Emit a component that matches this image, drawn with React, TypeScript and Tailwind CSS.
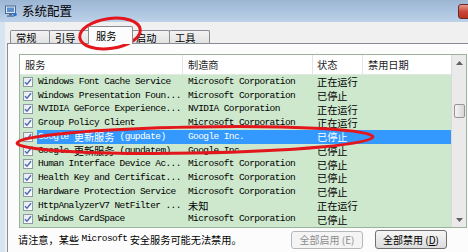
import React from "react";

const CJK = '"Noto Sans CJK SC", "Noto Sans", sans-serif';
const MONO = '"Liberation Mono", "Noto Sans CJK SC", monospace';

function M({ children, className = "" }: { children: React.ReactNode; className?: string }) {
  return (
    <span className={"text-[9.5px] tracking-[-0.6px] " + className} style={{ fontFamily: MONO }}>
      {children}
    </span>
  );
}
function C({ children, className = "" }: { children: React.ReactNode; className?: string }) {
  return (
    <span className={"text-[10.2px] " + className} style={{ fontFamily: CJK }}>
      {children}
    </span>
  );
}

type Row = { name: React.ReactNode; maker: React.ReactNode; status: string; sel?: boolean };

const rows: Row[] = [
  { name: <M>Windows Font Cache Service</M>, maker: <M>Microsoft Corporation</M>, status: "正在运行" },
  { name: <M>Windows Presentation Foun...</M>, maker: <M>Microsoft Corporation</M>, status: "已停止" },
  { name: <M>NVIDIA GeForce Experience...</M>, maker: <M>NVIDIA Corporation</M>, status: "正在运行" },
  { name: <M>Group Policy Client</M>, maker: <M>Microsoft Corporation</M>, status: "正在运行" },
  {
    name: (
      <>
        <M>Google&nbsp;</M>
        <C>更新服务</C>
        <M>&nbsp;(gupdate)</M>
      </>
    ),
    maker: <M>Google Inc.</M>,
    status: "已停止",
    sel: true,
  },
  {
    name: (
      <>
        <M>Google&nbsp;</M>
        <C>更新服务</C>
        <M>&nbsp;(gupdatem)</M>
      </>
    ),
    maker: <M>Google Inc.</M>,
    status: "已停止",
  },
  { name: <M>Human Interface Device Ac...</M>, maker: <M>Microsoft Corporation</M>, status: "已停止" },
  { name: <M>Health Key and Certificat...</M>, maker: <M>Microsoft Corporation</M>, status: "已停止" },
  { name: <M>Hardware Protection Service</M>, maker: <M>Microsoft Corporation</M>, status: "已停止" },
  { name: <M>HttpAnalyzerV7 NetFilter ...</M>, maker: <C>未知</C>, status: "正在运行" },
  { name: <M>Windows CardSpace</M>, maker: <M>Microsoft Corporation</M>, status: "已停止" },
];

function Check() {
  return (
    <div className="w-[10px] h-[10px] border border-[#8f9aa8] bg-gradient-to-br from-[#e6e9ee] to-white flex items-center justify-center">
      <svg width="8" height="8" viewBox="0 0 8 8">
        <path d="M1 4.2 L3 6.3 L7 1.2" fill="none" stroke="#4a6cb3" strokeWidth="1.4" />
      </svg>
    </div>
  );
}

function Tab({ label, sel = false, w }: { label: string; sel?: boolean; w: string }) {
  if (sel) {
    return (
      <div
        className={`${w} h-[18px] -mx-[2px] relative z-10 bg-[#fcfcfc] border border-b-0 border-[#898c95] rounded-t-[2px] flex items-center pl-[7px] text-[10.2px] text-black`}
        style={{ fontFamily: CJK }}
      >
        {label}
      </div>
    );
  }
  return (
    <div
      className={`${w} h-[14px] bg-gradient-to-b from-[#f2f2f2] to-[#e1e1e1] border border-b-0 border-[#898c95] -ml-px first:ml-0 rounded-t-[2px] flex items-center pl-[5px] text-[10.2px] text-black`}
      style={{ fontFamily: CJK }}
    >
      {label}
    </div>
  );
}

export default function App() {
  return (
    <div className="relative w-[468px] h-[252px] overflow-hidden flex flex-col bg-[#f0f0f0]" style={{ fontFamily: CJK }}>
      {/* title bar */}
      <div className="h-[22px] shrink-0 bg-gradient-to-b from-[#9bb5d3] to-[#bdd2e9] flex items-center pl-[5px]">
        <svg width="12" height="12" viewBox="0 0 12 12">
          <rect x="0.5" y="1" width="10" height="7.5" fill="#dfe9f5" stroke="#4a6a94" />
          <rect x="2" y="2.5" width="7" height="4.5" fill="#5a8fd0" />
          <rect x="4" y="9" width="3" height="1.5" fill="#4a6a94" />
          <rect x="2" y="10.5" width="7" height="1.2" fill="#4a6a94" />
          <circle cx="10" cy="9.5" r="1.8" fill="#2f6fcf" />
        </svg>
        <span className="ml-[5px] text-[12.5px] text-black leading-none">系统配置</span>
        <div className="ml-auto mr-[-12px] w-[22px] h-[15px] mt-[1px] rounded-[3px] border border-[#6b2a2a] bg-gradient-to-b from-[#e29a8e] via-[#c9463a] to-[#b8321f]" />
      </div>

      {/* body */}
      <div className="flex-1 flex">
        <div className="w-[5px] bg-[#d9e4f1]" />
        <div className="flex-1 flex flex-col">
          {/* tabs */}
          <div className="h-[22px] shrink-0 flex items-end pl-[5px]">
            <Tab label="常规" w="w-[40px]" />
            <Tab label="引导" w="w-[41px]" />
            <Tab label="服务" w="w-[45px]" sel />
            <Tab label="启动" w="w-[40px]" />
            <Tab label="工具" w="w-[41px]" />
          </div>
          {/* panel */}
          <div className="flex-1 ml-[2px] -mt-px border-t border-l border-[#898c95] bg-[#fcfcfc] pl-[11px] pt-[10px] flex flex-col">
            {/* list box */}
            <div className="w-[448px] h-[174px] border border-[#9cb29c] flex overflow-hidden bg-[#cde8cd]">
              <div className="w-[431px] flex flex-col">
                {/* header */}
                <div className="h-[20px] shrink-0 bg-white flex text-[10.2px] text-[#1e1e1e] border-b border-[#e2eae2]">
                  <div className="w-[163px] pl-[5px] flex items-center border-r border-[#e4e4e4]">服务</div>
                  <div className="w-[130px] pl-[5px] flex items-center border-r border-[#e4e4e4]">制造商</div>
                  <div className="w-[50px] pl-[4px] flex items-center border-r border-[#e4e4e4]">状态</div>
                  <div className="flex-1 pl-[5px] flex items-center">禁用日期</div>
                </div>
                {rows.map((r, i) => (
                  <div key={i} className="h-[13.75px] shrink-0 flex items-center">
                    <div className="w-[17px] pl-[3px] flex items-center">
                      <Check />
                    </div>
                    <div className={`flex-1 h-full flex items-center ${r.sel ? "bg-[#3399ff] text-white" : "text-black"}`}>
                      <div className="w-[146px] pl-[1px] whitespace-nowrap overflow-hidden flex items-center">{r.name}</div>
                      <div className="w-[130px] pl-[5px] whitespace-nowrap flex items-center">{r.maker}</div>
                      <div className="w-[50px] pl-[4px] flex items-center">
                        <C>{r.status}</C>
                      </div>
                    </div>
                  </div>
                ))}
                <div className="h-[4px] shrink-0 flex items-start overflow-hidden">
                  <div className="w-[17px] pl-[3px] pt-[1px]">
                    <div className="w-[10px] h-[10px] border border-[#8f9aa8] bg-white" />
                  </div>
                </div>
              </div>
              {/* scrollbar */}
              <div className="w-[15px] bg-[#eaeaea] border-l border-[#dadada] flex flex-col items-center">
                <div className="h-[15px] flex items-center justify-center">
                  <svg width="7" height="4" viewBox="0 0 7 4">
                    <path d="M0 4 L3.5 0 L7 4 Z" fill="#606060" />
                  </svg>
                </div>
                <div className="mt-[34px] w-[11px] h-[14px] rounded-[2px] border border-[#959595] bg-gradient-to-r from-[#f3f3f3] to-[#d8d8d8]" />
                <div className="flex-1" />
                <div className="h-[15px] flex items-center justify-center">
                  <svg width="7" height="4" viewBox="0 0 7 4">
                    <path d="M0 0 L3.5 4 L7 0 Z" fill="#606060" />
                  </svg>
                </div>
              </div>
            </div>
            {/* footer */}
            <div className="mt-[2px] h-[19px] flex items-center">
              <div className="-ml-px flex-1 flex items-center text-black whitespace-nowrap">
                <C>请注意，某些&nbsp;</C>
                <M>Microsoft</M>
                <C>&nbsp;安全服务可能无法禁用。</C>
              </div>
              <div className="w-[72px] h-[18px] border border-[#b5b8bb] rounded-[3px] bg-[#f4f4f4] flex items-center justify-center text-[10px] text-[#8d8d8d] whitespace-nowrap">
                全部启用 (E)
              </div>
              <div className="ml-[12px] mr-[21px] w-[72px] h-[19px] border border-[#707070] rounded-[3px] bg-gradient-to-b from-[#f6f6f6] to-[#dcdcdc] flex items-center justify-center text-[10px] text-black whitespace-nowrap">
                全部禁用 (<span className="underline">D</span>)
              </div>
            </div>
          </div>
        </div>
      </div>

      {/* red annotation ellipses */}
      <svg className="absolute inset-0 pointer-events-none" width="468" height="252" viewBox="0 0 468 252">
        <ellipse cx="110" cy="33.5" rx="30.5" ry="15" fill="none" stroke="#e3161c" strokeWidth="3" transform="rotate(-8 110 33.5)" />
        <ellipse cx="195" cy="140" rx="178" ry="13" fill="none" stroke="#e3161c" strokeWidth="3" transform="rotate(-1 195 140)" />
      </svg>
    </div>
  );
}
